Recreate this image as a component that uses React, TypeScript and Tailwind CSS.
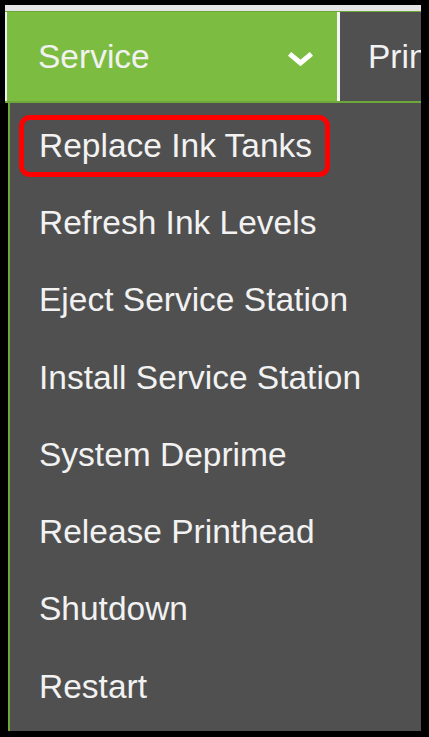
import { FC } from "react";

const items = [
  "Replace Ink Tanks",
  "Refresh Ink Levels",
  "Eject Service Station",
  "Install Service Station",
  "System Deprime",
  "Release Printhead",
  "Shutdown",
  "Restart",
];

const App: FC = () => {
  return (
    <div className="w-[429px] h-[737px] bg-black flex flex-col overflow-hidden text-[#f2f2f2] font-['Liberation_Sans',Arial,sans-serif]">
      <div className="h-[5px] shrink-0" />

      <div className="ml-[5px] mr-[8px] flex flex-col flex-1">
        {/* top page strip */}
        <div className="h-[6px] bg-[#e4e4e4]" />
        <div className="h-[1px] bg-[#6ea83b]" />

        {/* nav bar */}
        <div className="h-[89px] flex">
          <div className="w-[2px] bg-[#f0f0f0]" />
          <div className="w-[330px] bg-[#7cbd41] flex items-center justify-between pl-[31px] pr-[24px]">
            <span className="text-[33.5px] leading-none">Service</span>
            <svg width="25" height="15" viewBox="0 0 25 15" className="mt-[6px]">
              <polyline
                points="3.5,3.5 12.5,11 21.5,3.5"
                fill="none"
                stroke="#ffffff"
                strokeWidth="5"
                strokeLinecap="square"
              />
            </svg>
          </div>
          <div className="w-[3px] bg-[#f4f4f4]" />
          <div className="flex-1 bg-[#505050] flex items-center pl-[28px] overflow-hidden whitespace-nowrap">
            <span className="text-[33.5px] leading-none">Printer</span>
          </div>
        </div>
        <div className="h-[2px] bg-[#6ea83b]" />

        {/* dropdown */}
        <div className="h-[628px] flex">
          <div className="w-[3px] bg-black" />
          <div className="w-[2px] bg-[#6ea83b]" />
          <div className="flex-1 bg-[#505050] pt-[4px] flex flex-col">
            {items.map((label, i) => (
              <div key={label} className="h-[77.3px] flex items-center pl-[9px]">
                <span
                  className={
                    i === 0
                      ? "border-[5px] border-[#ff0000] rounded-[11px] pl-[15px] pr-[13px] py-[7px] text-[33.5px] leading-[38px]"
                      : "border-[5px] border-transparent pl-[15px] pr-[13px] py-[7px] text-[33.5px] leading-[38px]"
                  }
                >
                  {label}
                </span>
              </div>
            ))}
          </div>
        </div>
      </div>

      <div className="h-[6px] shrink-0" />
      <div className="h-[1px] bg-[#d8d8d8] shrink-0" />
    </div>
  );
};

export default App;
